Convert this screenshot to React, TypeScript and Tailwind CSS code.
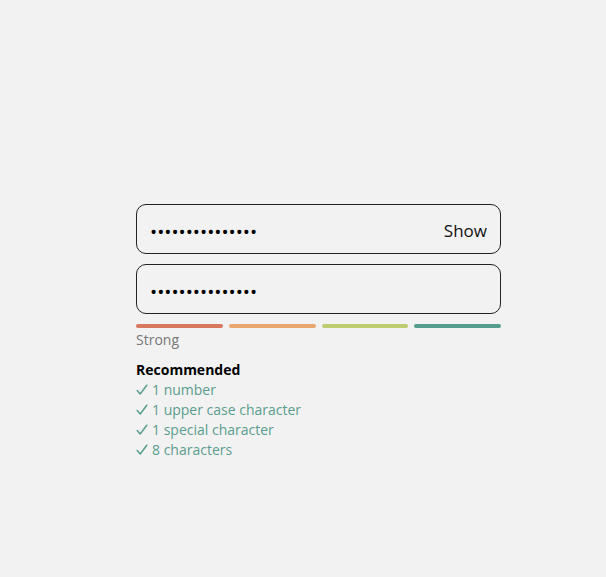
import React from "react";

function Check() {
  return (
    <svg width="12" height="12" viewBox="0 0 12 12" className="mr-[4px] inline-block align-[-1px]">
      <path d="M1.2 6.6 L4.2 10 L10.8 1.2" fill="none" stroke="#5a9d8e" strokeWidth="1.5" strokeLinecap="round" strokeLinejoin="round" />
    </svg>
  );
}

export default function App() {
  const bars = ["bg-[#d8785f]", "bg-[#e9a76f]", "bg-[#bccd6f]", "bg-[#569c8d]"];
  const items = ["1 number", "1 upper case character", "1 special character", "8 characters"];
  return (
    <div className="min-h-[577px] w-full bg-[#f2f2f2] pl-[136px] pt-[204px] font-['Open_Sans',sans-serif]">
      <div className="flex w-[365px] flex-col">
        <div className="flex h-[50px] items-center rounded-[10px] border border-[#222] pl-[13px] pr-[13px] pt-[4px]">
          <input
            type="password"
            readOnly
            value="abcdefghijklmno"
            className="mt-[3px] min-w-0 flex-1 bg-transparent text-[19px] text-black outline-none"
          />
          <span className="text-[17px] text-[#111]">Show</span>
        </div>
        <div className="mt-[10px] flex h-[50px] items-center rounded-[10px] border border-[#222] pl-[13px] pr-[13px] pt-[4px]">
          <input
            type="password"
            readOnly
            value="abcdefghijklmno"
            className="mt-[3px] min-w-0 flex-1 bg-transparent text-[19px] text-black outline-none"
          />
        </div>
        <div className="mt-[10px] flex gap-[6px]">
          {bars.map((b, i) => (
            <div key={i} className={`h-[4px] flex-1 rounded-full ${b}`} />
          ))}
        </div>
        <div className="mt-[2px] text-[14px] leading-[20px] text-[#777]">Strong</div>
        <div className="mt-[10px] text-[14px] font-bold leading-[20px] text-black">Recommended</div>
        {items.map((t) => (
          <div key={t} className="text-[14px] leading-[20px] text-[#5a9d8e]">
            <Check />
            {t}
          </div>
        ))}
      </div>
    </div>
  );
}
